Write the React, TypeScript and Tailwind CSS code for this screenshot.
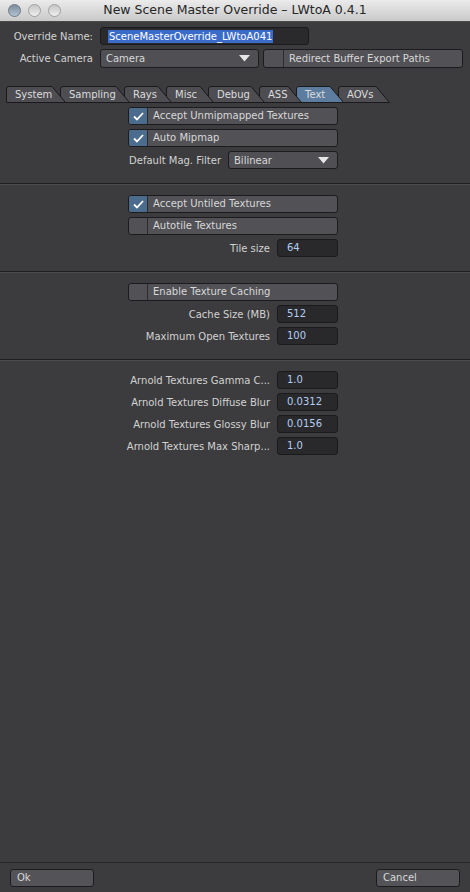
import React from "react";

const FONT = "font-['DejaVu_Sans','Liberation_Sans',sans-serif]";

function Check() {
  return (
    <svg width="11" height="9" viewBox="0 0 11 9">
      <path d="M1 4.5 L4 7.5 L10 1" fill="none" stroke="#ffffff" strokeWidth="1.8" />
    </svg>
  );
}

function CheckRow({ label, checked }: { label: string; checked: boolean }) {
  return (
    <div className="flex h-[18px] w-[210px] rounded-[3px] border border-[#1c1c1e] bg-[#515156] overflow-hidden">
      <div
        className={
          checked
            ? "w-[19px] shrink-0 bg-[#4b6c8d] border-r border-[#2c2c2e] flex items-center justify-center"
            : "w-[19px] shrink-0 border-r border-[#2c2c2e]"
        }
      >
        {checked && <Check />}
      </div>
      <span className="pl-[5px] leading-[16px] text-[#d8d8d8] whitespace-nowrap">{label}</span>
    </div>
  );
}

function Field({ label, value }: { label: string; value: string }) {
  return (
    <div className="flex h-[18px] items-center justify-end gap-[7px] w-[210px]">
      <span className="text-[#d2d2d2] whitespace-nowrap">{label}</span>
      <div className="w-[61px] h-[18px] shrink-0 rounded-[3px] border border-[#1a1a1c] bg-[#29292b] pl-[9px] leading-[16px] text-[#b4cdf2]">
        {value}
      </div>
    </div>
  );
}

function Triangle() {
  return (
    <svg width="11" height="7" viewBox="0 0 11 7">
      <path d="M0 0 H11 L5.5 6.5 Z" fill="#e6e6e6" />
    </svg>
  );
}

function Separator() {
  return (
    <div className="mt-[14px] mb-[10px] w-full">
      <div className="h-[1px] bg-[#1f1f21]" />
      <div className="h-[1px] bg-[#4c4c50]" />
    </div>
  );
}

const tabs = [
  { name: "System", w: 60, z: "z-[8]" },
  { name: "Sampling", w: 70, z: "z-[7]" },
  { name: "Rays", w: 48, z: "z-[6]" },
  { name: "Misc", w: 48, z: "z-[5]" },
  { name: "Debug", w: 57, z: "z-[4]" },
  { name: "ASS", w: 43, z: "z-[3]" },
  { name: "Text", w: 48, z: "z-[2]", active: true },
  { name: "AOVs", w: 52, z: "z-[1]" },
];

function Tab({ name, w, z, active, first }: { name: string; w: number; z: string; active?: boolean; first: boolean }) {
  const h = 17;
  return (
    <div className={`relative h-[17px] shrink-0 ${z} ${first ? "" : "-ml-[6px]"}`} style={{ width: w }}>
      <svg className="absolute inset-0" width={w} height={h} viewBox={`0 0 ${w} ${h}`}>
        <path
          d={`M0.5 ${h - 0.5} V3 Q0.5 0.5 3 0.5 H${w - 14} L${w - 0.5} ${h - 0.5} Z`}
          fill={active ? "#5c7d9f" : "#4d4d52"}
          stroke="#1a1a1c"
          strokeWidth="1"
        />
      </svg>
      <span className="relative pl-[9px] leading-[17px] text-[#dcdcdc] whitespace-nowrap">{name}</span>
    </div>
  );
}

function Button({ label }: { label: string }) {
  return (
    <div className="w-[84px] h-[18px] rounded-[3px] border border-[#1c1c1e] bg-[#535358] pl-[6px] leading-[16px] text-[#d8d8d8]">
      {label}
    </div>
  );
}

export default function App() {
  return (
    <div className={`w-[470px] h-[892px] flex flex-col bg-[#3c3c3e] text-[10px] ${FONT}`}>
      {/* title bar */}
      <div className="relative h-[22px] shrink-0 bg-gradient-to-b from-[#ebebeb] to-[#c9c9c9] border-b border-[#4a4a4a] flex items-center">
        <div className="flex gap-[7px] pl-[8px] items-center">
          <div className="w-[13px] h-[13px] rounded-full border border-[#6d7985] bg-gradient-to-b from-[#7d8c9c] to-[#b4c3d2]" />
          <div className="w-[13px] h-[13px] rounded-full border border-[#a0a0a0] bg-gradient-to-b from-[#c6c6c6] to-[#eeeeee]" />
          <div className="w-[13px] h-[13px] rounded-full border border-[#a0a0a0] bg-gradient-to-b from-[#c6c6c6] to-[#eeeeee]" />
        </div>
        <div className="absolute inset-0 flex items-center justify-center text-[12.5px] text-[#262626]">
          New Scene Master Override – LWtoA 0.4.1
        </div>
      </div>

      <div className="flex flex-col pt-[5px]">
        {/* override name */}
        <div className="flex items-center h-[18px]">
          <span className="w-[93px] text-right text-[#d2d2d2] whitespace-nowrap">Override Name:</span>
          <div className="ml-[7px] w-[209px] h-[18px] rounded-[3px] border border-[#1a1a1c] bg-[#2a2a2c] flex items-center pl-[7px]">
            <span className="bg-[#3b6bc9] text-white leading-[13px] px-[1px]">SceneMasterOverride_LWtoA041</span>
          </div>
        </div>
        {/* active camera */}
        <div className="flex items-center h-[19px] mt-[4px]">
          <span className="w-[93px] text-right text-[#d2d2d2] whitespace-nowrap">Active Camera</span>
          <div className="ml-[7px] w-[159px] h-[19px] rounded-[3px] border border-[#1c1c1e] bg-[#4f4f54] flex items-center justify-between pl-[5px] pr-[8px] text-[#d8d8d8]">
            <span>Camera</span>
            <Triangle />
          </div>
          <div className="ml-[4px] w-[200px] h-[19px] rounded-[3px] border border-[#1c1c1e] bg-[#515156] flex overflow-hidden">
            <div className="w-[20px] shrink-0 border-r border-[#2c2c2e]" />
            <span className="pl-[5px] leading-[17px] text-[#d8d8d8] whitespace-nowrap">Redirect Buffer Export Paths</span>
          </div>
        </div>

        {/* tabs */}
        <div className="flex mt-[18px] ml-[6px]">
          {tabs.map((t, i) => (
            <Tab key={t.name} name={t.name} w={t.w} z={t.z} active={t.active} first={i === 0} />
          ))}
        </div>

        {/* section 1 */}
        <div className="flex flex-col gap-[4px] ml-[128px] mt-[4px]">
          <CheckRow label="Accept Unmipmapped Textures" checked />
          <CheckRow label="Auto Mipmap" checked />
          <div className="flex h-[18px] items-center justify-end gap-[7px] w-[210px]">
            <span className="text-[#d2d2d2] whitespace-nowrap">Default Mag. Filter</span>
            <div className="w-[110px] h-[18px] shrink-0 rounded-[3px] border border-[#1c1c1e] bg-[#4f4f54] flex items-center justify-between pl-[5px] pr-[8px] text-[#d8d8d8]">
              <span>Bilinear</span>
              <Triangle />
            </div>
          </div>
        </div>

        <Separator />

        {/* section 2 */}
        <div className="flex flex-col gap-[4px] ml-[128px]">
          <CheckRow label="Accept Untiled Textures" checked />
          <CheckRow label="Autotile Textures" checked={false} />
          <Field label="Tile size" value="64" />
        </div>

        <Separator />

        {/* section 3 */}
        <div className="flex flex-col gap-[4px] ml-[128px]">
          <CheckRow label="Enable Texture Caching" checked={false} />
          <Field label="Cache Size (MB)" value="512" />
          <Field label="Maximum Open Textures" value="100" />
        </div>

        <Separator />

        {/* section 4 */}
        <div className="flex flex-col gap-[4px] ml-[128px]">
          <Field label="Arnold Textures Gamma C..." value="1.0" />
          <Field label="Arnold Textures Diffuse Blur" value="0.0312" />
          <Field label="Arnold Textures Glossy Blur" value="0.0156" />
          <Field label="Arnold Textures Max Sharp..." value="1.0" />
        </div>
      </div>

      <div className="flex-1" />

      {/* footer */}
      <div className="shrink-0 border-t border-[#262628] flex justify-between px-[10px] pt-[6px] pb-[5px]">
        <Button label="Ok" />
        <Button label="Cancel" />
      </div>
    </div>
  );
}
